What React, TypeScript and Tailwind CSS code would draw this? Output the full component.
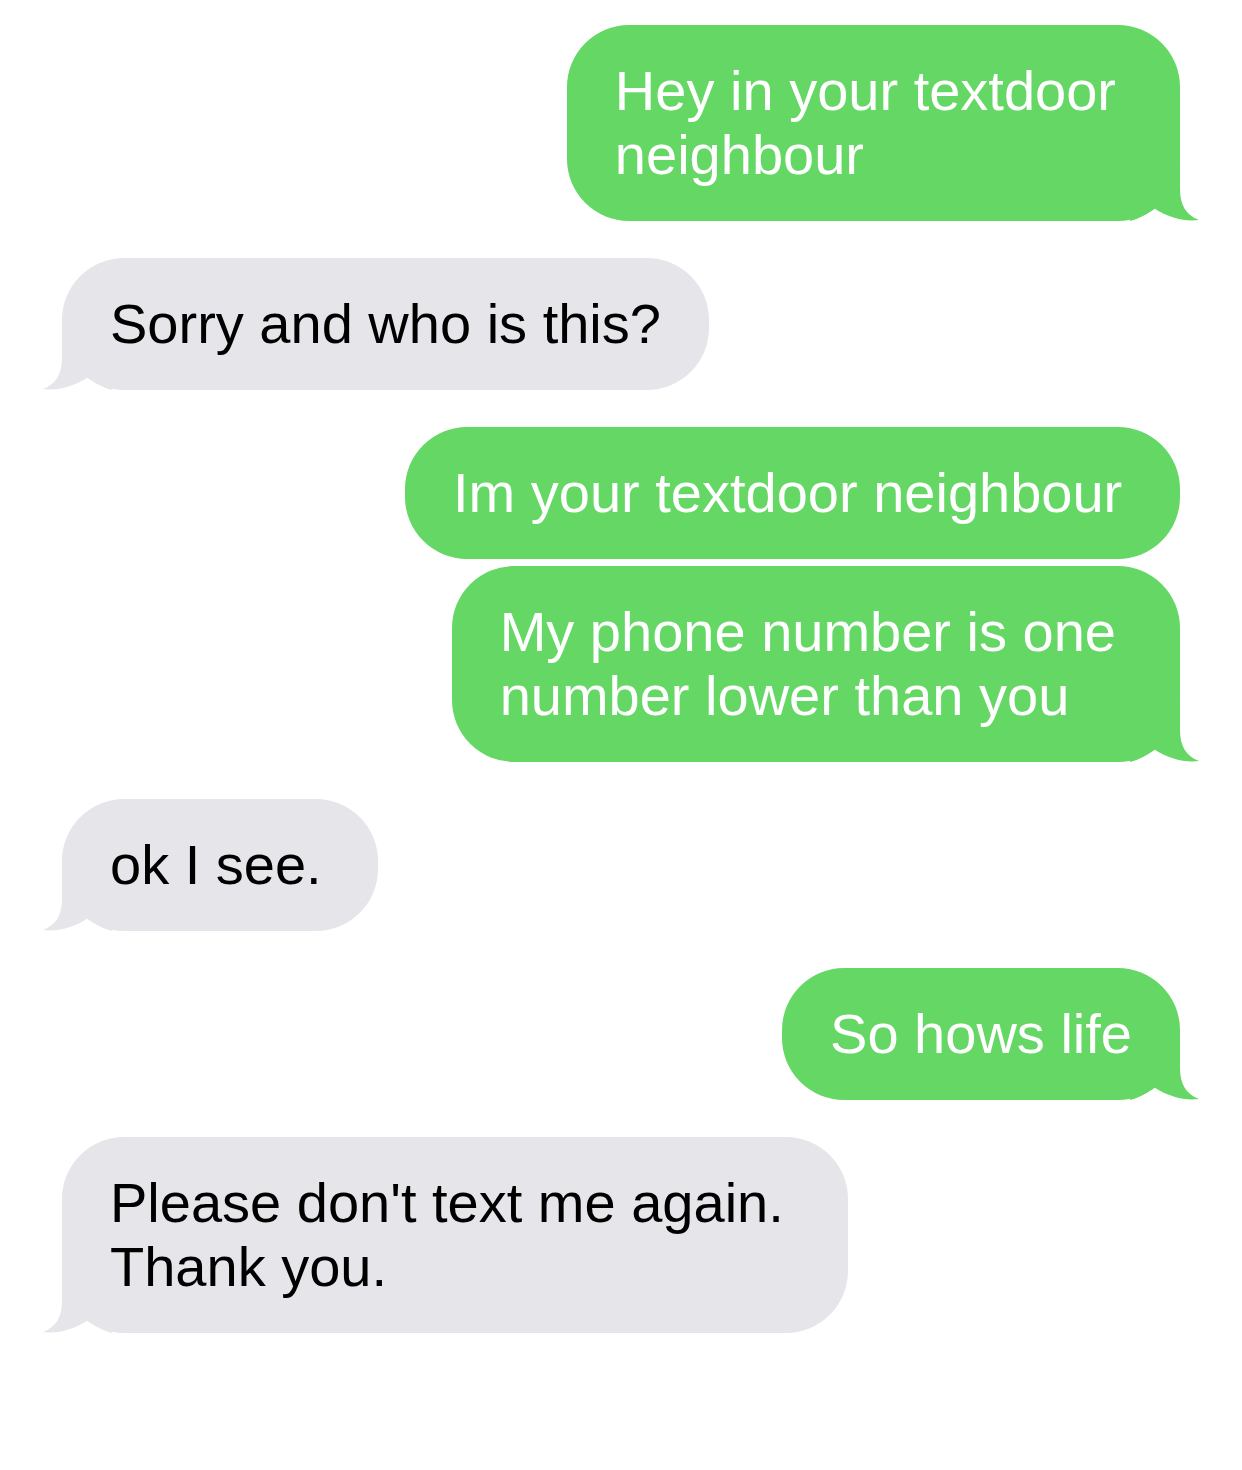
import React from "react";

type Msg = { from: "me" | "them"; lines: string[]; tail: boolean; gap: string; extra?: string };

const messages: Msg[] = [
  { from: "me", lines: ["Hey in your textdoor", "neighbour"], tail: true, gap: "mt-[25px]" },
  { from: "them", lines: ["Sorry and who is this?"], tail: true, gap: "mt-[37px]" },
  { from: "me", lines: ["Im your textdoor neighbour"], tail: false, gap: "mt-[37px]", extra: "min-w-[775px]" },
  { from: "me", lines: ["My phone number is one", "number lower than you"], tail: true, gap: "mt-[7px]" },
  { from: "them", lines: ["ok I see."], tail: true, gap: "mt-[37px]", extra: "min-w-[316px]" },
  { from: "me", lines: ["So hows life"], tail: true, gap: "mt-[37px]" },
  { from: "them", lines: ["Please don't text me again.", "Thank you."], tail: true, gap: "mt-[37px]" },
];

// bubble tail, drawn for the right side; flipped for incoming
const Tail = ({ color, left }: { color: string; left?: boolean }) => (
  <svg
    width="70"
    height="60"
    viewBox="0 0 70 60"
    className={
      left
        ? "absolute bottom-0 left-[-20px] -scale-x-100"
        : "absolute bottom-0 right-[-20px]"
    }
  >
    <path
      d="M0,0 H50 V28 C50,44 56,54 69,59 C56,61 38,57 24,47 C17,53 9,58 0,60 Z"
      fill={color}
    />
  </svg>
);

const Bubble = ({ msg }: { msg: Msg }) => {
  const mine = msg.from === "me";
  const color = mine ? "#64d764" : "#e5e5ea";
  const multi = msg.lines.length > 1;
  return (
    <div className={`flex ${mine ? "justify-end" : "justify-start"} ${msg.gap}`}>
      <div
        className={`relative rounded-[62px] pl-[48px] py-[34px] text-[56px] leading-[64px] whitespace-nowrap ${
          multi ? "pr-[64px]" : "pr-[48px]"
        } ${mine ? "bg-[#64d764] text-white" : "bg-[#e5e5ea] text-black"} ${msg.extra ?? ""}`}
      >
        {msg.tail && <Tail color={color} left={!mine} />}
        <div className="relative">
          {msg.lines.map((l, i) => (
            <div key={i}>{l}</div>
          ))}
        </div>
      </div>
    </div>
  );
};

export default function App() {
  return (
    <div
      className="w-[1242px] h-[1470px] bg-white px-[62px] overflow-hidden"
      style={{ fontFamily: '"Liberation Sans", Arial, sans-serif' }}
    >
      <div className="flex flex-col">
        {messages.map((m, i) => (
          <Bubble key={i} msg={m} />
        ))}
      </div>
    </div>
  );
}
